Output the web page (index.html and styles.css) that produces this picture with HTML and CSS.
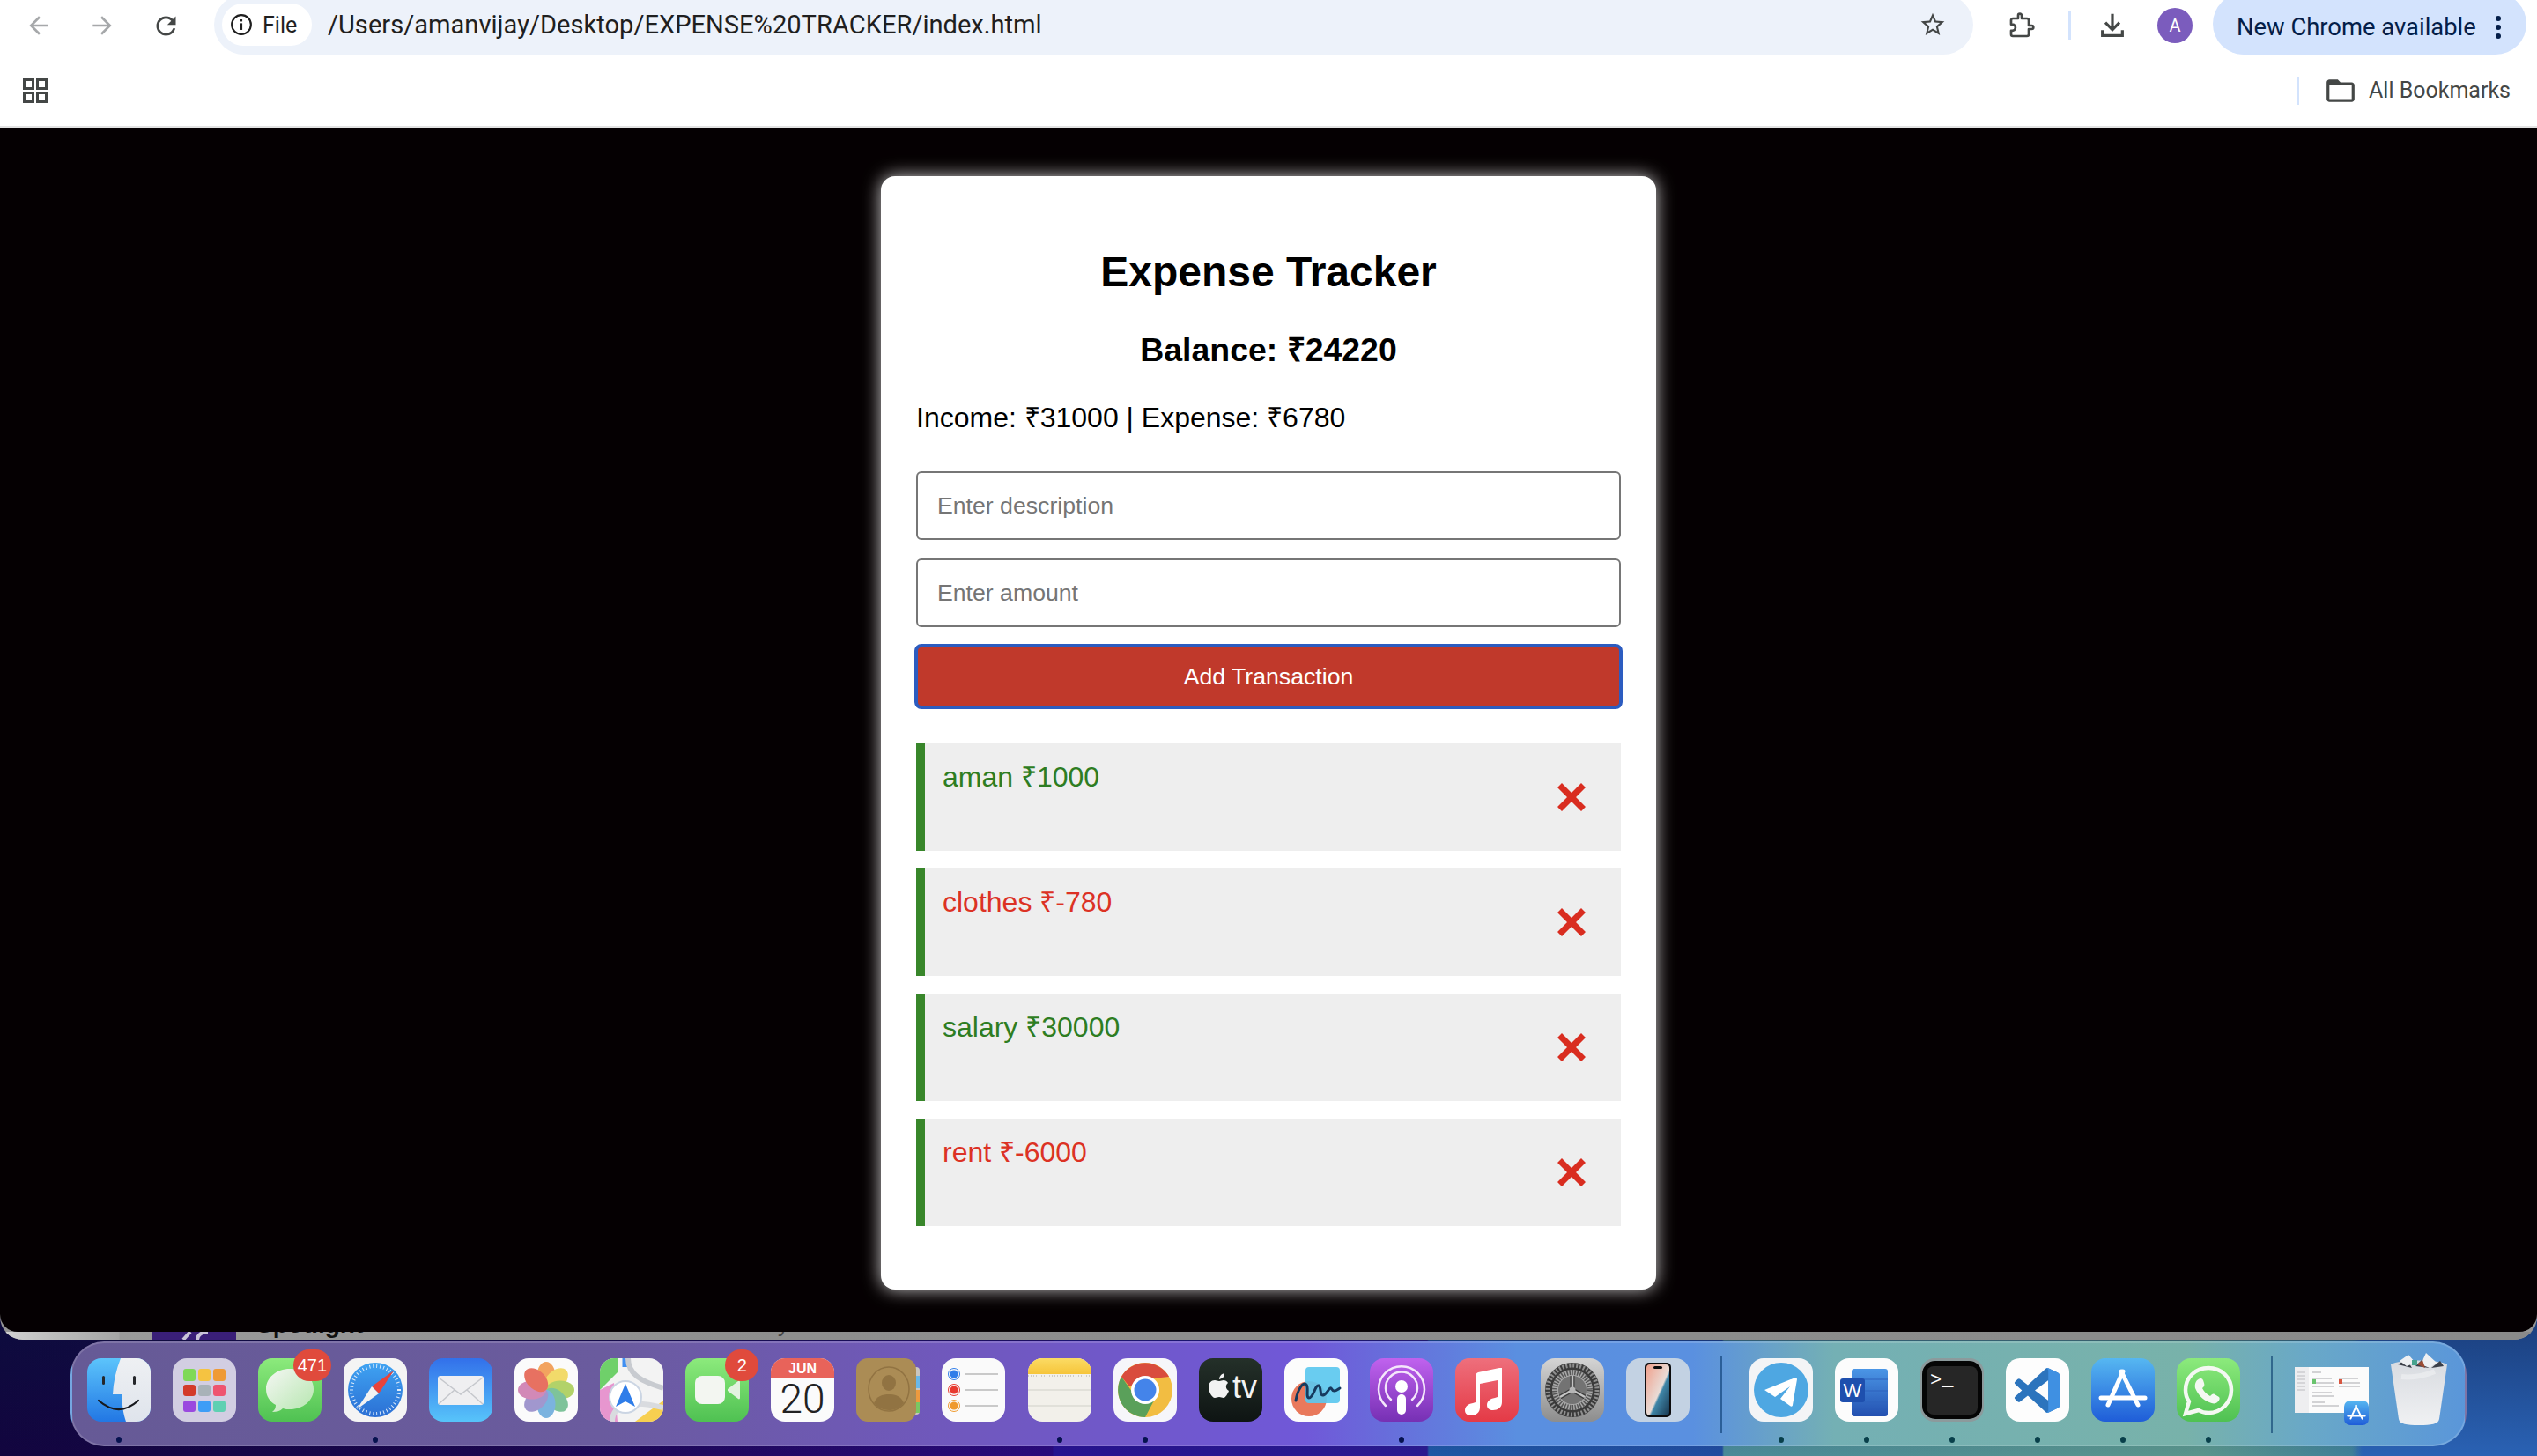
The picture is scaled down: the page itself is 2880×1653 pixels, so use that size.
FILE: index.html
```html
<!DOCTYPE html>
<html lang="en">
<head>
<meta charset="utf-8">
<title>Expense Tracker</title>
<link rel="stylesheet" href="styles.css">
</head>
<body>
<svg class="defs" aria-hidden="true">
  <defs>
    <linearGradient id="gFinder" x1="0" y1="0" x2="0" y2="1"><stop offset="0" stop-color="#5cc4fb"/><stop offset="1" stop-color="#2277e4"/></linearGradient>
    <linearGradient id="gFinderR" x1="0" y1="0" x2="0" y2="1"><stop offset="0" stop-color="#eef0f3"/><stop offset="1" stop-color="#dfe4ec"/></linearGradient>
    <linearGradient id="gGreen" x1="0" y1="0" x2="0" y2="1"><stop offset="0" stop-color="#8cea7c"/><stop offset="1" stop-color="#4fc152"/></linearGradient>
    <linearGradient id="gSafari" x1="0" y1="0" x2="0" y2="1"><stop offset="0" stop-color="#3fa3f2"/><stop offset="1" stop-color="#2b6fd4"/></linearGradient>
    <linearGradient id="gMail" x1="0" y1="0" x2="0" y2="1"><stop offset="0" stop-color="#3270ea"/><stop offset="1" stop-color="#57c4fa"/></linearGradient>
    <linearGradient id="gTv" x1="0" y1="0" x2="0" y2="1"><stop offset="0" stop-color="#243029"/><stop offset="1" stop-color="#0e1413"/></linearGradient>
    <linearGradient id="gPod" x1="0" y1="0" x2="0" y2="1"><stop offset="0" stop-color="#c062ee"/><stop offset="1" stop-color="#7630b4"/></linearGradient>
    <linearGradient id="gMusic" x1="0" y1="0" x2="0" y2="1"><stop offset="0" stop-color="#ee6f7c"/><stop offset="1" stop-color="#e43a46"/></linearGradient>
    <linearGradient id="gSet" x1="0" y1="0" x2="0" y2="1"><stop offset="0" stop-color="#d4d4d4"/><stop offset="1" stop-color="#8d8d8d"/></linearGradient>
    <linearGradient id="gStore" x1="0" y1="0" x2="0" y2="1"><stop offset="0" stop-color="#56b7f1"/><stop offset="1" stop-color="#1f5dd8"/></linearGradient>
    <linearGradient id="gNotes" x1="0" y1="0" x2="0" y2="1"><stop offset="0" stop-color="#fbdb64"/><stop offset="1" stop-color="#f6c53a"/></linearGradient>
    <linearGradient id="gScreen" x1="0" y1="0" x2="1" y2="1"><stop offset="0" stop-color="#f0a08c"/><stop offset=".55" stop-color="#e9dcd6"/><stop offset=".6" stop-color="#3f86a8"/><stop offset="1" stop-color="#18364f"/></linearGradient>
    <linearGradient id="gTrash" x1="0" y1="0" x2="0" y2="1"><stop offset="0" stop-color="#d8dbe0"/><stop offset="1" stop-color="#f0f1f3"/></linearGradient>
    <linearGradient id="gBubble" x1="0" y1="0" x2="1" y2="1"><stop offset="0" stop-color="#f5f7f4"/><stop offset="1" stop-color="#b5e6ae"/></linearGradient>
    <linearGradient id="gWord" x1="0" y1="0" x2="0" y2="1"><stop offset="0" stop-color="#4b96e6"/><stop offset="1" stop-color="#2350b0"/></linearGradient>
  </defs>
</svg>

<div class="window">
  <header class="browser">
    <div class="toolbar">
      <svg class="nav-btn disabled" viewBox="0 0 24 24"><path d="M20 11H7.83l5.59-5.59L12 4l-8 8 8 8 1.41-1.41L7.83 13H20v-2z"/></svg>
      <svg class="nav-btn disabled forward" viewBox="0 0 24 24"><path d="M12 4l-1.41 1.41L16.17 11H4v2h12.17l-5.58 5.59L12 20l8-8z"/></svg>
      <svg class="nav-btn reload" viewBox="0 0 24 24"><path d="M17.65 6.35C16.2 4.9 14.21 4 12 4c-4.42 0-7.99 3.58-7.99 8s3.57 8 7.99 8c3.73 0 6.84-2.55 7.73-6h-2.08c-.82 2.33-3.04 4-5.65 4-3.31 0-6-2.69-6-6s2.69-6 6-6c1.66 0 3.14.69 4.22 1.78L13 11h7V4l-2.35 2.35z"/></svg>
      <div class="omnibox">
        <div class="chip">
          <svg class="info" viewBox="0 0 24 24"><circle cx="12" cy="12" r="10" fill="none" stroke="#1f1f1f" stroke-width="2"/><rect x="11" y="10.5" width="2" height="7" fill="#1f1f1f"/><rect x="11" y="6.5" width="2" height="2.2" fill="#1f1f1f"/></svg>
          <span>File</span>
        </div>
        <span class="url">/Users/amanvijay/Desktop/EXPENSE%20TRACKER/index.html</span>
        <svg class="star" viewBox="0 0 24 24"><path d="M22 9.24l-7.19-.62L12 2 9.19 8.63 2 9.24l5.46 4.73L5.82 21 12 17.27 18.18 21l-1.63-7.03L22 9.24zM12 15.4l-3.76 2.27 1-4.28-3.32-2.88 4.38-.38L12 6.1l1.71 4.04 4.38.38-3.32 2.88 1 4.28L12 15.4z"/></svg>
      </div>
      <svg class="tool puzzle" viewBox="0 0 24 24"><path fill="none" stroke="#444746" stroke-width="2" stroke-linejoin="round" d="M20.5 12H18V7.5c0-.8-.7-1.5-1.500-1.500H12V3.500C12 2.700 11.300 2 10.500 2S9 2.700 9 3.500V6H4.500C3.700 6 3 6.700 3 7.500V11h1c1.500 0 2.700 1.200 2.700 2.700S5.500 16.400 4 16.400H3v3.100c0 .8.7 1.500 1.500 1.500h12c.8 0 1.500-.7 1.500-1.500V15h2.500c.8 0 1.500-.7 1.500-1.500s-.7-1.500-1.500-1.500z"/></svg>
      <span class="tool-sep"></span>
      <svg class="tool download" viewBox="0 0 24 24"><path fill="none" stroke="#444746" stroke-width="2.400" d="M12 2v13M6 9.500l6 6 6-6M3.500 16v4.500h17V16"/></svg>
      <span class="avatar">A</span>
      <div class="update"><span>New Chrome available</span><span class="kebab"><i></i><i></i><i></i></span></div>
    </div>
    <div class="bookmarks">
      <svg class="apps" viewBox="0 0 28 28"><g fill="none" stroke="#444746" stroke-width="3"><rect x="1.500" y="1.500" width="10" height="10"/><rect x="16.500" y="1.500" width="10" height="10"/><rect x="1.500" y="16.500" width="10" height="10"/><rect x="16.500" y="16.500" width="10" height="10"/></g></svg>
      <span class="bm-sep"></span>
      <svg class="folder" viewBox="0 0 24 24"><path d="M20 6h-8l-2-2H4c-1.100 0-1.990.9-1.990 2L2 18c0 1.100.9 2 2 2h16c1.100 0 2-.9 2-2V8c0-1.100-.9-2-2-2zm0 12H4V8h16v10z"/></svg>
      <span class="bm-label">All Bookmarks</span>
    </div>
  </header>

  <main class="viewport">
    <section class="card">
      <h1 class="title">Expense Tracker</h1>
      <h3 class="balance">Balance: ₹24220</h3>
      <p class="summary">Income: ₹31000 | Expense: ₹6780</p>
      <input class="field" type="text" placeholder="Enter description">
      <input class="field" type="number" placeholder="Enter amount">
      <button class="add" type="button">Add Transaction</button>
      <ul class="list">
        <li class="item income"><span>aman ₹1000</span><button class="del" type="button" aria-label="Delete"><svg viewBox="0 0 32 32"><path d="M0 5L5 0l11 11L27 0l5 5-11 11 11 11-5 5-11-11L5 32l-5-5 11-11z"/></svg></button></li>
        <li class="item expense"><span>clothes ₹-780</span><button class="del" type="button" aria-label="Delete"><svg viewBox="0 0 32 32"><path d="M0 5L5 0l11 11L27 0l5 5-11 11 11 11-5 5-11-11L5 32l-5-5 11-11z"/></svg></button></li>
        <li class="item income"><span>salary ₹30000</span><button class="del" type="button" aria-label="Delete"><svg viewBox="0 0 32 32"><path d="M0 5L5 0l11 11L27 0l5 5-11 11 11 11-5 5-11-11L5 32l-5-5 11-11z"/></svg></button></li>
        <li class="item expense"><span>rent ₹-6000</span><button class="del" type="button" aria-label="Delete"><svg viewBox="0 0 32 32"><path d="M0 5L5 0l11 11L27 0l5 5-11 11 11 11-5 5-11-11L5 32l-5-5 11-11z"/></svg></button></li>
      </ul>
    </section>
  </main>

  <div class="behind">
    <svg class="behind-logo" viewBox="0 0 96 60"><path fill="#3a1f78" d="M0 9h96V0H0z"/><path fill="none" stroke="#c9c4d8" stroke-width="4" d="M36 9L44 0M52 9c0-6 6-9 12-9"/></svg>
    <span class="behind-title">Spotlight</span>
    <span class="behind-sub">Favourably</span>
  </div>
</div>

<nav class="dock">
  <div class="app">
    <svg class="icon" viewBox="0 0 72 72"><rect width="72" height="72" fill="url(#gFinder)"/><path fill="url(#gFinderR)" d="M38 0Q30 20 29 41H40C39 52 41 63 44 72H72V0Z"/><rect x="17" y="20" width="3" height="10" rx="1.500" fill="#25272b"/><rect x="52" y="20" width="3" height="10" rx="1.500" fill="#25272b"/><path d="M13 48Q36 68 58 48" fill="none" stroke="#17191d" stroke-width="2.200" stroke-linecap="round"/></svg>
    <i class="dot navy"></i>
  </div>
  <div class="app">
    <svg class="icon" viewBox="0 0 72 72"><rect width="72" height="72" fill="#d2cee2"/><rect x="12" y="12" width="14" height="14" rx="3" fill="#7fd957"/><rect x="29" y="12" width="14" height="14" rx="3" fill="#f5c341"/><rect x="46" y="12" width="14" height="14" rx="3" fill="#ef9a36"/><rect x="12" y="30" width="14" height="13" rx="3" fill="#d33a2a"/><rect x="29" y="30" width="14" height="13" rx="3" fill="#a8b2b8"/><rect x="46" y="30" width="14" height="13" rx="3" fill="#ee5470"/><rect x="12" y="48" width="14" height="13" rx="3" fill="#9a49df"/><rect x="29" y="48" width="14" height="13" rx="3" fill="#3e9df6"/><rect x="46" y="48" width="14" height="13" rx="3" fill="#5fd0b2"/></svg>
    <i class="dot none"></i>
  </div>
  <div class="app">
    <svg class="icon" viewBox="0 0 72 72"><rect width="72" height="72" fill="url(#gGreen)"/><path fill="url(#gBubble)" d="M36 12C21 12 9 22 9 35c0 8 4 14 11 18 0 3-1 6-4 8 5 0 9-1 12-4 3 1 5 1 8 1 15 0 27-10 27-23S51 12 36 12z"/></svg>
    <span class="badge">471</span>
    <i class="dot none"></i>
  </div>
  <div class="app">
    <svg class="icon" viewBox="0 0 72 72"><rect width="72" height="72" fill="#f4f4f4"/><circle cx="36" cy="36" r="31" fill="url(#gSafari)"/><circle cx="36" cy="36" r="27" fill="none" stroke="#dcebfa" stroke-width="4" stroke-dasharray="1 3"/><path fill="#e8433a" d="M57 14L40 40 32 32z"/><path fill="#f2f2f2" d="M15 58L32 32 40 40z"/></svg>
    <i class="dot navy"></i>
  </div>
  <div class="app">
    <svg class="icon" viewBox="0 0 72 72"><rect width="72" height="72" fill="url(#gMail)"/><rect x="10" y="20" width="52" height="33" rx="3" fill="#efeff1"/><path d="M11 22l25 19 25-19M11 52l18-16M61 52L43 36" fill="none" stroke="#c5c7cc" stroke-width="1.500"/></svg>
    <i class="dot none"></i>
  </div>
  <div class="app">
    <svg class="icon" viewBox="0 0 72 72"><rect width="72" height="72" fill="#fbfbfb"/><g opacity=".82" transform="translate(36 36)"><ellipse rx="10.500" ry="16" cy="-16" fill="#ef8f3c"/><ellipse rx="10.500" ry="16" cy="-16" fill="#efd24a" transform="rotate(45)"/><ellipse rx="10.500" ry="16" cy="-16" fill="#a2c948" transform="rotate(90)"/><ellipse rx="10.500" ry="16" cy="-16" fill="#62b684" transform="rotate(135)"/><ellipse rx="10.500" ry="16" cy="-16" fill="#5ea3d8" transform="rotate(180)"/><ellipse rx="10.500" ry="16" cy="-16" fill="#8d80c4" transform="rotate(225)"/><ellipse rx="10.500" ry="16" cy="-16" fill="#c970a8" transform="rotate(270)"/><ellipse rx="10.500" ry="16" cy="-16" fill="#e2523f" transform="rotate(315)"/></g></svg>
    <i class="dot none"></i>
  </div>
  <div class="app">
    <svg class="icon" viewBox="0 0 72 72"><rect width="72" height="72" fill="#f3f3f3"/><path fill="#6fd06a" d="M0 0H20V16L0 36z"/><path fill="#e796cf" d="M0 36L16 28 20 72H0z"/><path fill="#f7cf50" d="M40 72L72 48V72z"/><path fill="none" stroke="#3f8ff2" stroke-width="9" d="M30-4V10"/><path fill="none" stroke="#c8cbd0" stroke-width="6" d="M32 0c0 18 14 26 40 34"/><path fill="none" stroke="#d9dbdf" stroke-width="6" d="M14 72C14 50 40 48 72 56"/><circle cx="29" cy="44" r="18" fill="#fff" stroke="#cbd5e3" stroke-width="2"/><circle cx="29" cy="44" r="15" fill="#fff"/><path fill="#2f7de9" d="M29 29l11 26-11-6-11 6z"/></svg>
    <i class="dot none"></i>
  </div>
  <div class="app">
    <svg class="icon" viewBox="0 0 72 72"><rect width="72" height="72" fill="url(#gGreen)"/><rect x="11" y="20" width="34" height="32" rx="8" fill="#f3f6f1"/><path fill="#e3f2df" d="M48 35l12-9c1-1 2 0 2 1v18c0 1-1 2-2 1l-12-9z"/></svg>
    <span class="badge">2</span>
    <i class="dot none"></i>
  </div>
  <div class="app">
    <svg class="icon" viewBox="0 0 72 72"><rect width="72" height="72" fill="#fbfbfb"/><rect width="72" height="22" fill="#e8635a"/><text class="cal-month" x="36" y="17" text-anchor="middle">JUN</text><text class="cal-day" x="36" y="62" text-anchor="middle">20</text></svg>
    <i class="dot none"></i>
  </div>
  <div class="app">
    <svg class="icon square" viewBox="0 0 72 72"><rect x="60" y="10" width="12" height="54" rx="4" fill="#c9c6bf"/><rect x="64" y="20" width="8" height="14" fill="#69b8e8"/><rect x="64" y="36" width="8" height="14" fill="#ed9a3e"/><rect x="64" y="50" width="8" height="12" fill="#79c763"/><rect x="0" y="0" width="68" height="72" rx="13" fill="#ab8c55"/><ellipse cx="37" cy="35" rx="23" ry="25" fill="none" stroke="#917342" stroke-width="1.500"/><ellipse cx="37" cy="28" rx="8" ry="9" fill="#917342"/><path fill="#917342" d="M20 51c3-8 10-10 17-10s14 2 17 10c-4 5-10 8-17 8s-13-3-17-8z"/></svg>
    <i class="dot none"></i>
  </div>
  <div class="app">
    <svg class="icon" viewBox="0 0 72 72"><rect width="72" height="72" fill="#fafafa"/><circle cx="14" cy="18" r="4.500" fill="#2f7de9"/><circle cx="14" cy="18" r="6.500" fill="none" stroke="#2f7de9"/><circle cx="14" cy="36" r="4.500" fill="#e8392e"/><circle cx="14" cy="36" r="6.500" fill="none" stroke="#e8392e"/><circle cx="14" cy="54" r="4.500" fill="#ef9a2e"/><circle cx="14" cy="54" r="6.500" fill="none" stroke="#ef9a2e"/><path d="M27 18H64M27 36H64M27 54H64" stroke="#c9c9c9" stroke-width="2"/></svg>
    <i class="dot none"></i>
  </div>
  <div class="app">
    <svg class="icon" viewBox="0 0 72 72"><rect width="72" height="72" fill="#f2f0ea"/><rect width="72" height="18" fill="url(#gNotes)"/><path d="M0 20H72" stroke="#cfccc4" stroke-width="2" stroke-dasharray="1 2"/><path d="M0 36H72M0 54H72" stroke="#dcdad3" stroke-width="1.500"/></svg>
    <i class="dot navy"></i>
  </div>
  <div class="app">
    <svg class="icon" viewBox="0 0 72 72"><rect width="72" height="72" fill="#f6f6fa"/><circle cx="36" cy="36" r="31" fill="#f2bd42"/><path fill="#d94c3d" d="M9 21A31 31 0 0 1 63 21L36 24 18 32z"/><path fill="#5aa05a" d="M9 21A31 31 0 0 0 36 67L46 48 24 42z"/><circle cx="36" cy="36" r="16" fill="#fff"/><circle cx="36" cy="36" r="12.500" fill="#4484ea"/></svg>
    <i class="dot navy"></i>
  </div>
  <div class="app">
    <svg class="icon" viewBox="0 0 72 72"><rect width="72" height="72" fill="url(#gTv)"/><path fill="#f2f2f2" d="M23 26c2 0 3-1 5-1 2 0 4 1 5 3-3 2-3 7 1 9-1 3-4 8-6 8-2 0-3-1-5-1-2 0-3 1-5 1-3 0-7-7-7-12 0-5 3-8 7-8 2 0 3 1 5 1zM23 24c0-3 2-6 6-7 0 4-2 6-6 7z"/><text class="tv-text" x="38" y="45">tv</text></svg>
    <i class="dot none"></i>
  </div>
  <div class="app">
    <svg class="icon" viewBox="0 0 72 72"><rect width="72" height="72" fill="#fcfcfc"/><circle cx="28" cy="46" r="20" fill="#e9795c"/><rect x="24" y="10" width="39" height="41" rx="4" fill="#5cc8ef" opacity=".92"/><path d="M13 48c2-12 8-22 12-18 3 3-1 15 3 15 5 0 7-15 11-14 3 1 1 12 5 11 4-1 6-7 8-8 2-1 2 4 5 3 2 0 4-2 6-3" fill="none" stroke="#173a5e" stroke-width="3" stroke-linecap="round"/></svg>
    <i class="dot none"></i>
  </div>
  <div class="app">
    <svg class="icon" viewBox="0 0 72 72"><rect width="72" height="72" fill="url(#gPod)"/><g fill="none" stroke="#f4e6fb" stroke-linecap="round" stroke-width="2.500"><path d="M18 54A26 26 0 1 1 54 54"/><path d="M24 47A18 18 0 1 1 48 47"/></g><circle cx="36" cy="32" r="7" fill="#fff"/><rect x="31" y="41" width="10" height="23" rx="5" fill="#fff"/></svg>
    <i class="dot navy"></i>
  </div>
  <div class="app">
    <svg class="icon" viewBox="0 0 72 72"><rect width="72" height="72" fill="url(#gMusic)"/><path fill="#fff" d="M53 11v39c0 6-5 9-10 9-4 0-7-2-7-6s3-7 9-8l3-1V25l-20 4v27c0 6-5 9-10 9-4 0-7-2-7-6s3-7 9-8l3-1V20c0-2 1-3 3-4l24-5c2 0 3 0 3 0z"/></svg>
    <i class="dot none"></i>
  </div>
  <div class="app">
    <svg class="icon" viewBox="0 0 72 72"><rect width="72" height="72" fill="url(#gSet)"/><circle cx="36" cy="36" r="31" fill="#3a3a3a"/><circle cx="36" cy="36" r="28" fill="none" stroke="#8f8f8f" stroke-width="5" stroke-dasharray="2 2"/><circle cx="36" cy="36" r="23" fill="#a8a8a8"/><circle cx="36" cy="36" r="20" fill="none" stroke="#555" stroke-width="6" stroke-dasharray="1.500 1.500"/><circle cx="36" cy="36" r="16" fill="#737373"/><g stroke="#3d3d3d" stroke-width="5"><path d="M36 36V20M36 36L22 44M36 36L50 44"/></g><g stroke="#c4c4c4" stroke-width="2.500"><path d="M36 36V20M36 36L22 44M36 36L50 44"/></g><circle cx="36" cy="36" r="3.500" fill="#b5b5b5"/></svg>
    <i class="dot none"></i>
  </div>
  <div class="app">
    <svg class="icon" viewBox="0 0 72 72"><rect width="72" height="72" fill="#c3d2e3"/><rect x="21" y="5" width="30" height="62" rx="5" fill="#0c0c0e"/><rect x="23" y="7" width="26" height="58" rx="4" fill="url(#gScreen)"/><rect x="31" y="9" width="10" height="3" rx="1.500" fill="#0c0c0e"/></svg>
    <i class="dot none"></i>
  </div>

  <span class="dock-sep first"></span>

  <div class="app">
    <svg class="icon" viewBox="0 0 72 72"><rect width="72" height="72" fill="#f3f4f6"/><ellipse cx="36" cy="36" rx="31" ry="31" fill="#4ea7e2"/><path fill="#fff" d="M17 36l35-14c1 0 2 1 2 2l-5 29c0 2-2 2-3 1l-11-8 11-14-17 12z"/></svg>
    <i class="dot teal"></i>
  </div>
  <div class="app">
    <svg class="icon" viewBox="0 0 72 72"><rect width="72" height="72" fill="#fcfcfc"/><rect x="19" y="12" width="41" height="54" rx="3" fill="url(#gWord)"/><path d="M19 24H60M19 37H60M19 50H60" stroke="#2e62bd" stroke-width="1"/><rect x="6" y="23" width="28" height="27" rx="3" fill="#1e4fae"/><text class="word-w" x="20" y="44" text-anchor="middle">W</text></svg>
    <i class="dot teal"></i>
  </div>
  <div class="app">
    <svg class="icon terminal" viewBox="0 0 72 72"><rect width="72" height="72" rx="16" fill="#8c9a9c"/><rect x="2" y="3" width="68" height="66" rx="15" fill="#050505"/><rect x="7" y="9" width="58" height="55" rx="8" fill="#262626"/><text class="term-text" x="11" y="31">&gt;_</text></svg>
    <i class="dot teal"></i>
  </div>
  <div class="app">
    <svg class="icon" viewBox="0 0 72 72"><rect width="72" height="72" fill="#fdfdfd"/><g transform="translate(10 11) scale(.51)"><path fill="#2c74bd" fill-rule="evenodd" d="M70.900 99.300a6.200 6.200 0 0 0 5-.2l20.600-9.900a6.200 6.200 0 0 0 3.500-5.600V16.400a6.200 6.200 0 0 0-3.500-5.600L75.900.9a6.200 6.200 0 0 0-7.100 1.200L29.400 38 12.200 25a4.200 4.200 0 0 0-5.300.2L1.400 30.300a4.200 4.200 0 0 0 0 6.200L16.300 50 1.400 63.600a4.200 4.200 0 0 0 0 6.200l5.500 5a4.200 4.200 0 0 0 5.300.2L29.400 62l39.400 35.900a6.200 6.200 0 0 0 2.100 1.400zM75 27.300L45.100 50 75 72.700z"/><path fill="#3f90e2" d="M70.900 99.300a6.200 6.200 0 0 0 5-.2l20.600-9.900a6.200 6.200 0 0 0 3.500-5.600V16.400a6.200 6.200 0 0 0-3.500-5.600L75.900.9a6.200 6.200 0 0 0-5-.2c2.300 1 4.100 3 4.100 6v86.800c0 3-1.800 4.800-4.100 5.800z"/></g></svg>
    <i class="dot teal"></i>
  </div>
  <div class="app">
    <svg class="icon" viewBox="0 0 72 72"><rect width="72" height="72" fill="url(#gStore)"/><g fill="none" stroke="#fff" stroke-width="5" stroke-linecap="round"><path d="M36 15L19 53"/><path d="M34 15L53 53"/><path d="M11 45H61"/></g></svg>
    <i class="dot teal"></i>
  </div>
  <div class="app">
    <svg class="icon" viewBox="0 0 72 72"><rect width="72" height="72" fill="url(#gGreen)"/><path fill="none" stroke="#f4f8f2" stroke-width="4.500" d="M36 11C21 11 10 22 10 36c0 5 1 9 4 13l-4 14 15-4c3 2 7 3 11 3 15 0 26-12 26-26S51 11 36 11z"/><path fill="#f4f8f2" d="M27 23c2 0 3 1 4 5 1 3 0 4-2 6 2 4 5 7 9 9 2-2 3-3 5-2l5 3c1 1 1 3-1 5-2 3-6 3-10 1-8-3-13-9-16-16-1-5 1-10 6-11z"/></svg>
    <i class="dot teal"></i>
  </div>

  <span class="dock-sep second"></span>

  <div class="app doc">
    <div class="sheet">
      <svg class="sheet-art" viewBox="0 0 84 52"><rect width="84" height="52" fill="#fbfbfb"/><rect width="16" height="52" fill="#eeeef0"/><path d="M20 6h10M20 13h22M50 13h22M20 18h24M50 18h24M20 22h24M50 22h24M20 29h22M20 33h24M20 40h14M20 44h30" stroke="#a9a9ad" stroke-width="1"/><path d="M2 6h10M2 10h10M2 14h10M2 18h10M2 22h10M2 26h10" stroke="#bcbcc0" stroke-width="1"/><rect x="20" y="14" width="4" height="5" fill="#6ac46e"/><rect x="50" y="14" width="4" height="5" fill="#d8563f"/></svg>
      <svg class="mini-store" viewBox="0 0 72 72"><rect width="72" height="72" fill="url(#gStore)"/><g fill="none" stroke="#fff" stroke-width="5" stroke-linecap="round"><path d="M36 15L19 53"/><path d="M34 15L53 53"/><path d="M11 45H61"/></g></svg>
    </div>
  </div>
  <div class="app trash">
    <svg class="trash-art" viewBox="0 0 64 84"><path fill="url(#gTrash)" d="M0 14C10 8 54 8 64 14L55 76C54 82 46 83 32 83S10 82 9 76z"/><path fill="#3b3f48" d="M8 14L18 8 24 18zM28 16L36 8 44 18zM46 18L56 10 60 16z"/><path fill="#eef0f2" d="M10 10L20 3 28 12 18 16zM34 14L40 1 52 12 44 18z"/><path fill="#47a38e" d="M24 9h6v6h-6z"/><path fill="#9b4c34" d="M30 14l6-5 3 9z"/><path d="M12 28Q30 30 50 22" stroke="#fff" stroke-width="6" opacity=".35" fill="none"/></svg>
  </div>
</nav>
</body>
</html>
```

FILE: styles.css
```css
* { box-sizing: border-box; }

html, body { margin: 0; height: 100%; }

body {
  height: 100vh;
  overflow: hidden;
  position: relative;
  font-family: "Liberation Sans", Arial, sans-serif;
  background:
    linear-gradient(180deg, rgba(8, 20, 60, .45) 0%, rgba(8, 20, 60, 0) 100%) 0 1500px / 100% 153px no-repeat,
    linear-gradient(90deg, #12053f 0, #1b0750 600px, #2a0a7c 1195px, #271390 1196px, #2a1a90 1620px, #1f57a4 1622px, #214c9f 1955px, #4a8a98 1957px, #5a958c 2500px, #3f8098 2670px, #2a62b4 2682px, #2a62b4 100%);
}

.defs { position: absolute; width: 0; height: 0; }

/* ---- browser window ---- */
.window {
  height: 1521px;
  display: flex;
  flex-direction: column;
  background: #959595;
  border-radius: 0 0 26px 26px;
  overflow: hidden;
}

.browser { background: #fff; height: 145px; flex: none; border-bottom: 2px solid #e3e3e3; font-family: Roboto, "Liberation Sans", sans-serif; }

.toolbar { height: 62px; display: flex; align-items: center; padding-left: 28px; overflow: hidden; }

.nav-btn { width: 32px; height: 32px; flex: none; fill: #444746; margin-top: -4px; }
.nav-btn.disabled { fill: #a6a8aa; }
.nav-btn.forward { margin-left: 40px; }
.nav-btn.reload { margin-left: 40px; width: 33px; height: 33px; }

.omnibox {
  flex: none;
  width: 1997px;
  height: 68px;
  margin: -6px 0 0 38px;
  padding: 0 30px 0 9px;
  border-radius: 34px;
  background: #edf2fa;
  display: flex;
  align-items: center;
}

.chip { width: 102px; height: 48px; border-radius: 24px; background: #fff; display: flex; align-items: center; padding-left: 9px; gap: 11px; font-size: 25px; color: #1f1f1f; flex: none; }
.info { width: 26px; height: 26px; }

.url { margin-left: 18px; font-size: 29.1px; color: #1f1f1f; flex: 1; white-space: nowrap; }
.star { width: 32px; height: 32px; fill: #444746; flex: none; }

.tool { width: 32px; height: 32px; flex: none; margin-top: -4px; }
.puzzle { margin-left: 39px; }
.tool-sep { width: 3px; height: 32px; background: #d3e3fd; margin: -4px 0 0 37px; flex: none; }
.download { margin-left: 31px; }
.avatar { width: 40px; height: 40px; border-radius: 50%; background: #7b5cbd; color: #fff; font-size: 20px; margin: -4px 0 0 35px; display: flex; align-items: center; justify-content: center; flex: none; }

.update {
  flex: none;
  width: 356px;
  height: 70px;
  margin: -8px 0 0 23px;
  padding: 8px 16px 0 27px;
  border-radius: 35px;
  background: #d3e3fd;
  color: #041e49;
  font-size: 27.4px;
  display: flex;
  align-items: center;
  justify-content: space-between;
  white-space: nowrap;
}
.kebab { display: flex; flex-direction: column; gap: 4px; margin-right: 13px; }
.kebab i { display: block; width: 6px; height: 6px; border-radius: 50%; background: #041e49; }

.bookmarks { height: 81px; display: flex; align-items: center; padding: 0 30px 0 26px; color: #444746; }
.apps { width: 28px; height: 28px; flex: none; }
.bm-sep { width: 3px; height: 32px; background: #d3e3fd; margin-left: auto; flex: none; }
.folder { width: 38px; height: 38px; fill: #444746; margin-left: 28px; flex: none; }
.bm-label { font-size: 25px; margin-left: 13px; white-space: nowrap; }

/* ---- page content ---- */
.viewport {
  height: 1367px;
  flex: none;
  background: #050002;
  padding-top: 55px;
  border-radius: 0 0 20px 20px;
}

.card {
  width: 880px;
  height: 1264px;
  margin: 0 auto;
  padding: 40px;
  background: #fff;
  border-radius: 16px;
  box-shadow: 0 0 20px rgba(255, 255, 255, .8);
  color: #000;
}

.title { margin: 41px 0 0; font-size: 48px; line-height: 55px; font-weight: 700; text-align: center; }
.balance { margin: 40px 0 0; font-size: 37.44px; line-height: 43px; font-weight: 700; text-align: center; }
.summary { margin: 37px 0 0; font-size: 32px; line-height: 37px; }

.field {
  display: block;
  width: 800px;
  height: 78px;
  margin: 0 0 21px;
  padding: 0 22px;
  border: 2px solid #767676;
  border-radius: 6px;
  font-family: "Liberation Sans", Arial, sans-serif;
  font-size: 26.67px;
  background: #fff;
  appearance: textfield;
}
.summary + .field { margin-top: 42px; }
.field::placeholder { color: #757575; opacity: 1; }

.add {
  display: block;
  width: 800px;
  height: 70px;
  border: 0;
  border-radius: 6px;
  outline: 4px solid #2c5cc0;
  outline-offset: -2px;
  background: #c0392b;
  color: #fff;
  font-family: "Liberation Sans", Arial, sans-serif;
  font-size: 26.67px;
}

.list { list-style: none; margin: 41px 0 0; padding: 0; display: flex; flex-direction: column; gap: 20px; }

.item {
  height: 122px;
  display: flex;
  justify-content: space-between;
  padding: 20px 40px 20px 20px;
  border-left: 10px solid #38862a;
  background: #eee;
  font-size: 32px;
  line-height: 37px;
}
.item.income { color: #2e7d22; }
.item.expense { color: #dc3224; }

.del { align-self: center; width: 32px; height: 32px; padding: 0; border: 0; background: none; display: block; }
.del svg { display: block; width: 32px; height: 32px; fill: #d92d20; }

/* sliver of the window behind */
.behind { flex: none; height: 9px; display: flex; overflow: hidden; background: linear-gradient(90deg, #d4d4d4 0, #bdbdbd 60px, #a5a5a5 135px, #9a9a9a 136px, #8e8e8e 887px, #8a8a8a 100%); color: #111; }
.behind-logo { flex: none; width: 96px; height: 60px; margin-left: 172px; }
.behind-title { flex: none; margin: -26px 0 0 23px; font-size: 28px; line-height: 36px; font-weight: 700; }
.behind-sub { flex: none; margin: -26px 0 0 364px; font-size: 24px; line-height: 36px; color: #444; }

/* ---- dock ---- */
.dock {
  height: 119px;
  margin: 2px 80px 0;
  padding: 17px 0 0 17px;
  display: flex;
  align-items: flex-start;
  gap: 25.05px;
  border: 2px solid rgba(255, 255, 255, .16);
  border-radius: 38px;
  background: linear-gradient(90deg, #665a96 0, #6a5b9e 600px, #7058bd 1000px, #7058d8 1400px, #5a8fe0 1640px, #5a90e0 1840px, #74b0b4 2000px, #78b2aa 2400px, #69a8c8 2540px, #5a96da 2720px);
}

.app { position: relative; flex: none; width: 72px; display: flex; flex-direction: column; align-items: center; }
.icon { display: block; width: 72px; height: 72px; border-radius: 16px; flex: none; }
.icon.square, .icon.terminal { border-radius: 0; }

.dot { display: block; width: 6px; height: 7px; border-radius: 50%; margin-top: 17px; }
.dot.navy { background: #06124f; }
.dot.teal { background: #083f4a; }
.dot.none { background: transparent; }

.badge {
  position: absolute;
  top: -10px;
  right: -11px;
  min-width: 38px;
  height: 36px;
  padding: 0 5px;
  border-radius: 18px;
  background: #e04a3c;
  color: #fff;
  font-size: 20px;
  line-height: 36px;
  text-align: center;
}

.cal-month { font-size: 16px; font-weight: 700; fill: #fff; font-family: "Liberation Sans", sans-serif; }
.cal-day { font-size: 46px; font-weight: 300; fill: #222; font-family: Roboto, sans-serif; }
.tv-text { font-size: 36px; fill: #f2f2f2; font-family: "Liberation Sans", sans-serif; }
.word-w { font-size: 22px; font-weight: 400; fill: #fff; font-family: "Liberation Sans", sans-serif; }
.term-text { font-size: 22px; fill: #fff; font-family: "Liberation Mono", monospace; }

.dock-sep { flex: none; width: 2px; height: 88px; margin-top: -3px; background: rgba(0, 50, 100, .55); }
.dock-sep.first { margin-left: 10px; margin-right: 6px; }
.dock-sep.second { margin-left: 10px; }

.app.doc { width: 84px; padding-top: 10px; }
.sheet { position: relative; width: 84px; height: 52px; }
.sheet-art { display: block; width: 84px; height: 52px; }
.mini-store { position: absolute; right: 0; bottom: -14px; width: 28px; height: 28px; border-radius: 7px; }

.app.trash { width: 64px; }
.trash-art { display: block; width: 64px; height: 84px; margin-top: -7px; flex: none; }
```
